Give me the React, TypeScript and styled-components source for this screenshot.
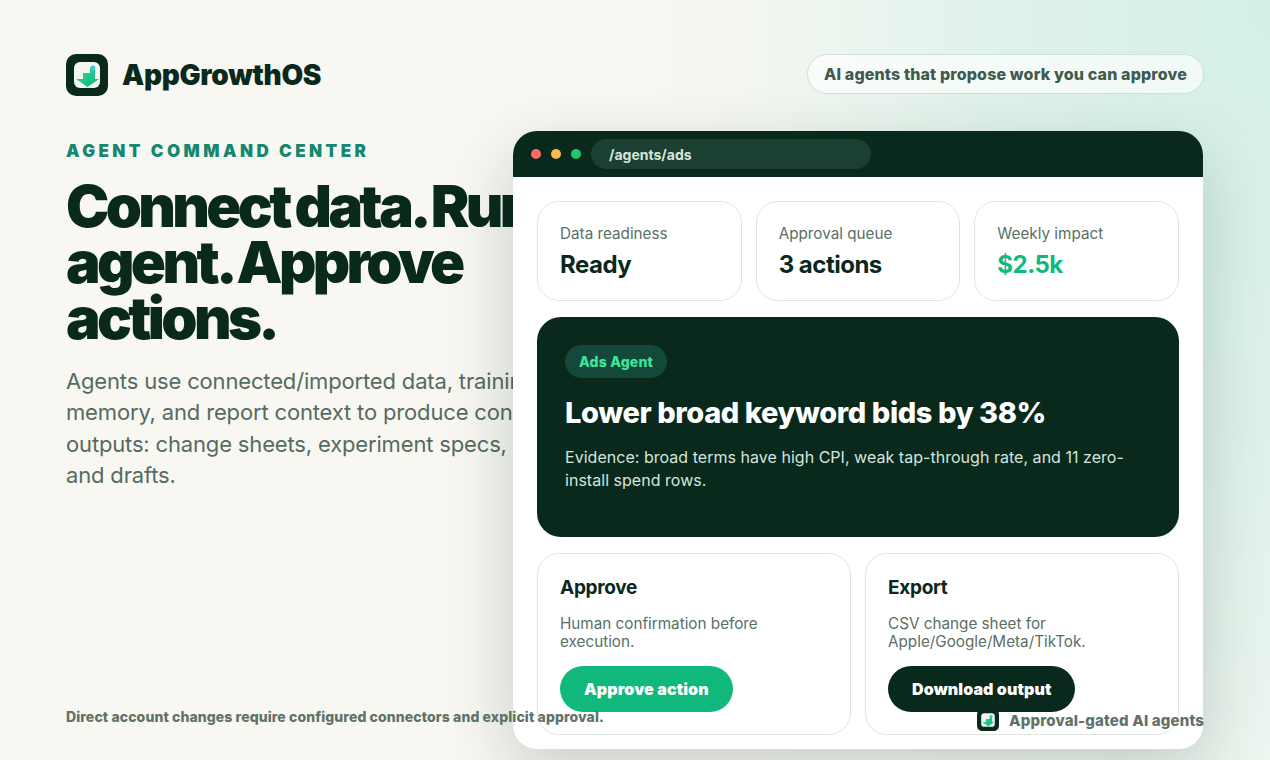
import React from "react";
import styled, { createGlobalStyle } from "styled-components";

const Global = createGlobalStyle`
  html, body { margin: 0; padding: 0; height: 100%; }
  body { font-family: Inter, "Liberation Sans", sans-serif; overflow: hidden; }
  * { box-sizing: border-box; }
`;

const Page = styled.div`
  position: relative;
  width: 1270px;
  height: 760px;
  overflow: hidden;
  background:
    radial-gradient(ellipse 620px 900px at 100% 0%, #d3f0e7 0, rgba(211,240,231,0.62) 45%, rgba(211,240,231,0.12) 85%, rgba(211,240,231,0) 100%),
    linear-gradient(90deg, #f8f7f2 0%, #f8f7f2 60%, #f1f6f1 100%);
  padding: 54px 66px 0;
  color: #08291c;
`;

const Top = styled.header`
  display: flex;
  align-items: flex-start;
  justify-content: space-between;
  height: 42px;
`;

const Brand = styled.div`
  display: flex;
  align-items: center;
  gap: 14px;
  font-size: 28px;
  font-weight: 900;
  letter-spacing: -0.3px;
  color: #08291c;
`;

const Pill = styled.div`
  height: 40px;
  padding: 0 16px;
  display: flex;
  align-items: center;
  border-radius: 20px;
  border: 1px solid #cfe2d9;
  background: rgba(255,255,255,0.65);
  font-size: 16px;
  font-weight: 800;
  letter-spacing: 0.14px;
  color: #3f5a4e;
`;

const Left = styled.section`
  width: 500px;
  margin-top: 45px;
`;

const Eyebrow = styled.div`
  font-size: 17px;
  font-weight: 900;
  letter-spacing: 3.45px;
  color: #13876f;
  line-height: 20px;
`;

const Headline = styled.h1`
  margin: 17px 0 0;
  font-size: 58px;
  line-height: 56px;
  font-weight: 900;
  letter-spacing: -3.65px;
  word-spacing: -2px;
  color: #08291c;
  white-space: pre;
`;

const Lead = styled.p`
  margin: 20px 0 0;
  font-size: 22px;
  line-height: 31.3px;
  letter-spacing: -0.16px;
  color: #566b60;
  white-space: pre;
`;

const Foot = styled.div`
  position: absolute;
  z-index: 2;
  left: 66px;
  top: 708px;
  font-size: 14px;
  font-weight: 800;
  letter-spacing: 0.1px;
  color: #5f7268;
`;

const Windowed = styled.div`
  position: absolute;
  left: 513px;
  top: 131px;
  width: 690px;
  height: 618px;
  border-radius: 24px;
  overflow: hidden;
  background: #fff;
  box-shadow: 0 24px 70px rgba(8,41,28,0.2);
`;

const Chrome = styled.div`
  height: 46px;
  background: #08291c;
  display: flex;
  align-items: center;
  padding: 0 18px;
  gap: 10px;
`;

const Dot = styled.span<{ $c: string }>`
  width: 10px;
  height: 10px;
  border-radius: 50%;
  background: ${(p) => p.$c};
`;

const Url = styled.div`
  width: 280px;
  height: 30px;
  border-radius: 15px;
  background: #1b3f30;
  padding: 0 18px;
  display: flex;
  align-items: center;
  font-size: 14px;
  font-weight: 700;
  color: #d5e5dd;
`;

const Body = styled.div`
  padding: 24px;
  display: flex;
  flex-direction: column;
  gap: 16px;
`;

const Stats = styled.div`
  display: grid;
  grid-template-columns: repeat(3, 1fr);
  gap: 14px;
`;

const Card = styled.div`
  border: 1px solid #dfe6e2;
  border-radius: 22px;
  background: #fff;
  padding: 22px 22px 20px;
`;

const StatLabel = styled.div`
  font-size: 15.25px;
  line-height: 20px;
  color: #5a6f65;
`;

const StatValue = styled.div<{ $green?: boolean }>`
  margin-top: 6px;
  font-size: 24px;
  line-height: 30px;
  font-weight: 700;
  letter-spacing: -0.5px;
  color: ${(p) => (p.$green ? "#10b97b" : "#08291c")};
`;

const Hero = styled.div`
  height: 220px;
  border-radius: 24px;
  background: #08291c;
  padding: 28px;
  color: #fff;
`;

const Tag = styled.span`
  display: inline-flex;
  align-items: center;
  height: 33px;
  padding: 0 14px;
  border-radius: 17px;
  background: #14483a;
  color: #3ee69b;
  font-size: 14px;
  font-weight: 800;
  letter-spacing: 0.2px;
`;

const HeroTitle = styled.h2`
  margin: 17px 0 0;
  font-size: 29px;
  line-height: 36px;
  font-weight: 800;
  letter-spacing: -0.4px;
`;

const HeroText = styled.p`
  margin: 15px 0 0;
  font-size: 16px;
  line-height: 23px;
  letter-spacing: 0.03px;
  color: #d5e5dd;
`;

const Actions = styled.div`
  display: grid;
  grid-template-columns: 1fr 1fr;
  gap: 14px;
`;

const ActionCard = styled(Card)`
  height: 182px;
  padding: 22px;
`;

const ActionTitle = styled.div`
  font-size: 19px;
  line-height: 24px;
  font-weight: 700;
  letter-spacing: -0.3px;
  color: #08291c;
`;

const ActionText = styled.div`
  margin-top: 15px;
  font-size: 15.25px;
  line-height: 18px;
  color: #5a6f65;
`;

const Btn = styled.button<{ $dark?: boolean }>`
  display: block;
  margin-top: 15px;
  height: 46px;
  padding: 0 24px;
  border: 0;
  border-radius: 23px;
  font-family: inherit;
  font-size: 16px;
  font-weight: 900;
  letter-spacing: 0.12px;
  color: #fff;
  background: ${(p) => (p.$dark ? "#08291c" : "#10b97b")};
`;

const Badge = styled.div`
  position: absolute;
  z-index: 2;
  right: 66px;
  top: 709px;
  display: flex;
  align-items: center;
  gap: 10px;
  font-size: 15px;
  font-weight: 800;
  letter-spacing: 0.17px;
  color: #5f7268;
`;

const Logo = ({ size, id }: { size: number; id: string }) => (
  <svg width={size} height={size} viewBox="0 0 42 42">
    <defs>
      <linearGradient id={id} x1="0" y1="0" x2="1" y2="1">
        <stop offset="0" stopColor="#2fdc92" />
        <stop offset="1" stopColor="#10b57c" />
      </linearGradient>
    </defs>
    <rect width="42" height="42" rx="10" fill="#08291c" />
    <rect x="8" y="8" width="26" height="26" rx="6" fill="#f1f6f0" />
    <path d="M10 25 L17 25 L17 19 L24 19 L24 13 L29 13 L29 25 L33 25 L21.5 33 Z" fill={`url(#${id})`} />
    <circle cx="27" cy="14" r="2.4" fill="#3cc8f0" />
  </svg>
);

export default function App() {
  return (
    <Page>
      <Global />
      <Top>
        <Brand><Logo size={42} id="lg-a" />AppGrowthOS</Brand>
        <Pill>AI agents that propose work you can approve</Pill>
      </Top>
      <Left>
        <Eyebrow>AGENT COMMAND CENTER</Eyebrow>
        <Headline>{"Connect data. Run an\nagent. Approve\nactions."}</Headline>
        <Lead>{"Agents use connected/imported data, training,\nmemory, and report context to produce concrete\noutputs: change sheets, experiment specs, SQL,\nand drafts."}</Lead>
      </Left>
      <Windowed>
        <Chrome>
          <Dot $c="#ff6b5f" /><Dot $c="#ffb84a" /><Dot $c="#1fc96f" />
          <Url>/agents/ads</Url>
        </Chrome>
        <Body>
          <Stats>
            <Card><StatLabel>Data readiness</StatLabel><StatValue>Ready</StatValue></Card>
            <Card><StatLabel>Approval queue</StatLabel><StatValue>3 actions</StatValue></Card>
            <Card><StatLabel>Weekly impact</StatLabel><StatValue $green>$2.5k</StatValue></Card>
          </Stats>
          <Hero>
            <Tag>Ads Agent</Tag>
            <HeroTitle>Lower broad keyword bids by 38%</HeroTitle>
            <HeroText>Evidence: broad terms have high CPI, weak tap-through rate, and 11 zero-install spend rows.</HeroText>
          </Hero>
          <Actions>
            <ActionCard>
              <ActionTitle>Approve</ActionTitle>
              <ActionText>Human confirmation before execution.</ActionText>
              <Btn>Approve action</Btn>
            </ActionCard>
            <ActionCard>
              <ActionTitle>Export</ActionTitle>
              <ActionText>CSV change sheet for Apple/Google/Meta/TikTok.</ActionText>
              <Btn $dark>Download output</Btn>
            </ActionCard>
          </Actions>
        </Body>
      </Windowed>
      <Foot>Direct account changes require configured connectors and explicit approval.</Foot>
      <Badge><Logo size={22} id="lg-b" />Approval-gated AI agents</Badge>
    </Page>
  );
}
